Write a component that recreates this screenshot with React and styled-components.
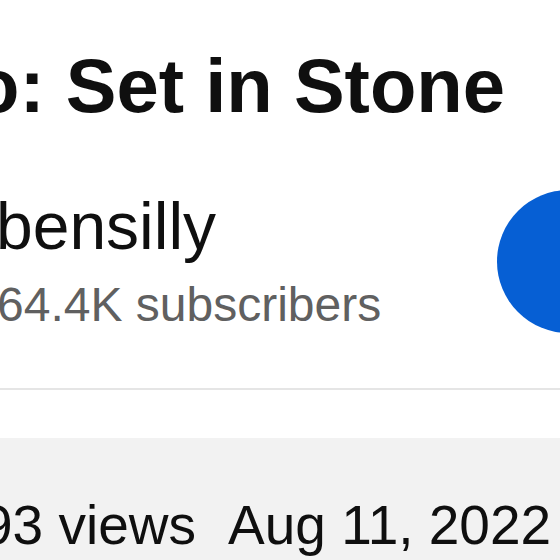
import React from "react";
import styled, { createGlobalStyle } from "styled-components";

const Global = createGlobalStyle`
  html, body { margin: 0; padding: 0; background: #fff; overflow: hidden; }
  body { font-family: "Liberation Sans", Arial, sans-serif; }
`;

const Page = styled.div`
  width: 560px;
  height: 560px;
  overflow: hidden;
  display: flex;
  flex-direction: column;
  background: #fff;
`;

const Title = styled.h1`
  margin: 0;
  padding-top: 40px;
  margin-left: -27px;
  font-size: 76px;
  line-height: 91px;
  font-weight: 700;
  color: #0f0f0f;
  white-space: nowrap;
`;

const ChannelRow = styled.div`
  display: flex;
  align-items: flex-start;
  justify-content: space-between;
  margin-top: 59px;
  height: 158px;
`;

const ChannelInfo = styled.div`
  display: flex;
  flex-direction: column;
`;

const ChannelName = styled.div`
  font-size: 66px;
  line-height: 72px;
  font-weight: 400;
  color: #0f0f0f;
  white-space: nowrap;
  margin-left: -4px;
`;

const Subs = styled.div`
  font-size: 48px;
  line-height: 56px;
  font-weight: 400;
  color: #606060;
  white-space: nowrap;
  margin-top: 15px;
  margin-left: -3px;
`;

const SubscribeButton = styled.div`
  width: 143px;
  height: 143px;
  border-radius: 72px;
  background: #065fd4;
  margin-right: -80px;
  flex-shrink: 0;
`;

const Divider = styled.div`
  height: 2px;
  background: #e5e5e5;
  margin-top: 40px;
`;

const Description = styled.div`
  margin-top: 48px;
  flex: 1;
  background: #f2f2f2;
  padding-top: 56px;
`;

const Meta = styled.div`
  display: flex;
  gap: 32px;
  margin-left: -18px;
  font-size: 55px;
  line-height: 62px;
  font-weight: 400;
  color: #0f0f0f;
  white-space: nowrap;
`;

export default function App() {
  return (
    <>
      <Global />
      <Page>
        <Title>o: Set in Stone</Title>
        <ChannelRow>
          <ChannelInfo>
            <ChannelName>bensilly</ChannelName>
            <Subs>64.4K subscribers</Subs>
          </ChannelInfo>
          <SubscribeButton />
        </ChannelRow>
        <Divider />
        <Description>
          <Meta>
            <span>93 views</span>
            <span>Aug 11, 2022</span>
          </Meta>
        </Description>
      </Page>
    </>
  );
}
